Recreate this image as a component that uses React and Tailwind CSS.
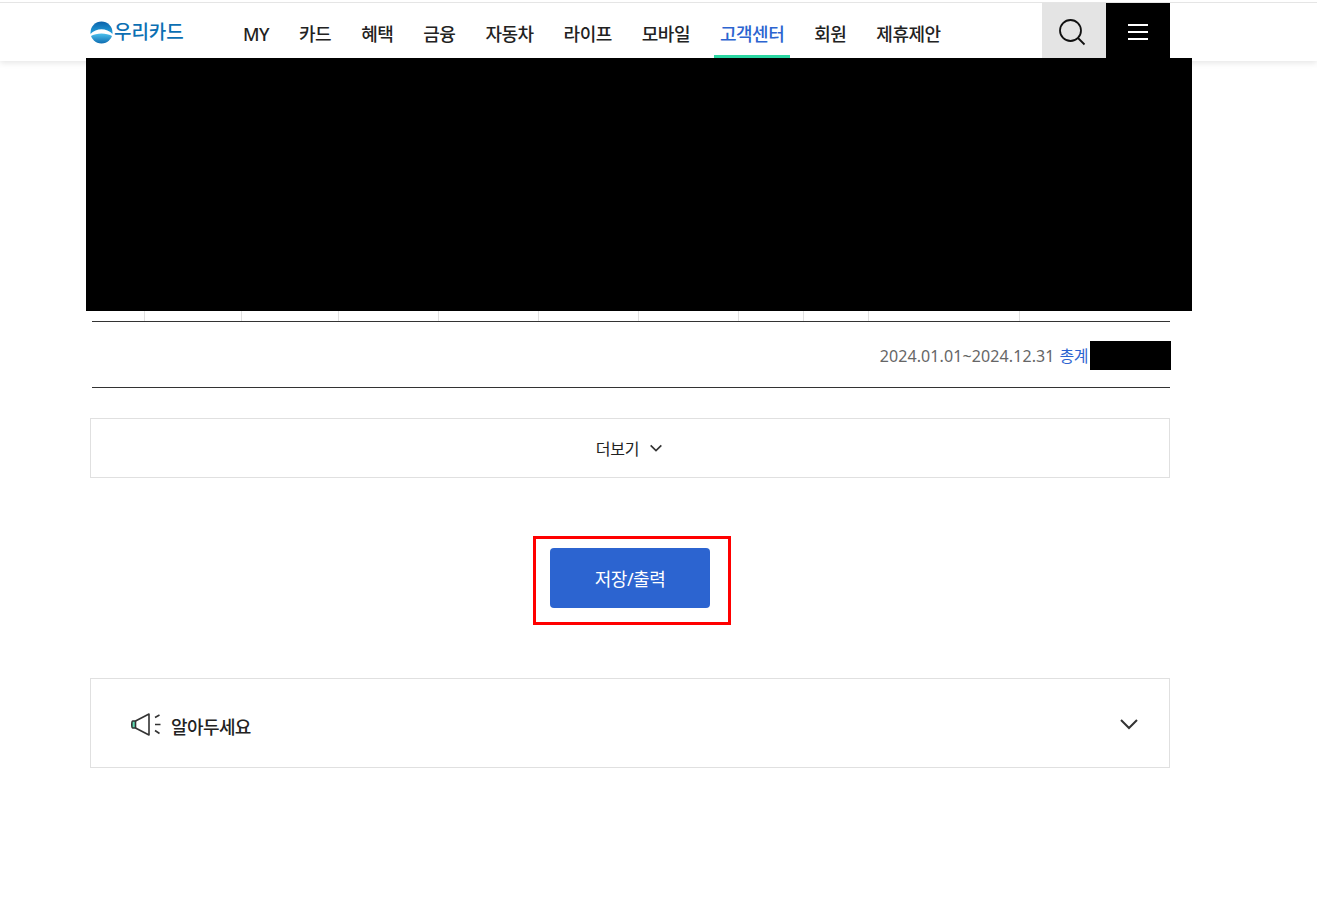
const font = { fontFamily: '"Noto Sans", "Noto Sans CJK KR", sans-serif' };

const navItems = ["MY", "카드", "혜택", "금융", "자동차", "라이프", "모바일", "고객센터", "회원", "제휴제안"];
const columns = ["w-[53px]", "w-[97px]", "w-[97px]", "w-[100px]", "w-[100px]", "w-[100px]", "w-[100px]", "w-[65px]", "w-[65px]", "w-[151px]", "flex-1"];

function Logo() {
  return (
    <a className="flex h-[24px] w-[95px] items-center text-[#0b6fb3]">
      <svg width="23" height="23" viewBox="0 0 23 23" className="shrink-0">
        <defs>
          <linearGradient id="logoTop" x1="0" y1="0" x2="0" y2="1">
            <stop offset="0" stopColor="#0a5fa8" />
            <stop offset="1" stopColor="#25a6e0" />
          </linearGradient>
          <linearGradient id="logoBottom" x1="0" y1="0" x2="0" y2="1">
            <stop offset="0" stopColor="#4cc0ec" />
            <stop offset="1" stopColor="#0a68ae" />
          </linearGradient>
          <clipPath id="logoClip">
            <circle cx="11.5" cy="11.5" r="11" />
          </clipPath>
        </defs>
        <g clipPath="url(#logoClip)">
          <rect width="23" height="23" fill="#fff" />
          <path d="M0 13.500C3.500 9.600 7.500 8.200 11.500 8.200S19.500 9.600 23 13.500V0H0Z" fill="url(#logoTop)" />
          <path d="M0 15.500C4 13.400 7.500 12.600 11.500 12.600S19 13.400 23 15.500V23H0Z" fill="url(#logoBottom)" />
        </g>
      </svg>
      <span className="ml-[1px] whitespace-nowrap text-[19px] leading-none font-medium tracking-[-0.1px]">우리카드</span>
    </a>
  );
}

function Header() {
  return (
    <header className="h-[61px] bg-white pt-[2px] shadow-[0_2px_6px_rgba(0,0,0,0.1)]">
      <div className="h-full border-t border-[#e5e5e5]">
        <div className="ml-[90px] flex h-[55px] w-[1080px] items-stretch">
          <div className="flex items-center pt-[4px]">
            <Logo />
          </div>
          <nav className="ml-[52px] flex gap-[18px]">
            {navItems.map((item) => {
              const active = item === "고객센터";
              return (
                <a
                  key={item}
                  className={
                    "flex h-full items-center border-b-[3px] px-[6px] pt-[10px] text-[18px] font-medium tracking-[-0.5px] whitespace-nowrap " +
                    (active ? "border-[#2bd6a2] text-[#2c64d0]" : "border-transparent text-[#222]")
                  }
                >
                  {item}
                </a>
              );
            })}
          </nav>
          <div className="ml-auto flex">
            <button className="flex w-[64px] items-center justify-center bg-[#e4e4e4] pr-[4px] pt-[2px]">
              <svg width="28" height="28" viewBox="0 0 28 28" fill="none" stroke="#111" strokeWidth="1.8">
                <circle cx="12.500" cy="12.500" r="10.500" />
                <path d="M20 20L26.500 26.500" />
              </svg>
            </button>
            <button className="flex w-[64px] flex-col items-center gap-[5px] bg-black pt-[21px]">
              <span className="h-[2px] w-[20px] bg-white" />
              <span className="h-[2px] w-[20px] bg-white" />
              <span className="h-[2px] w-[20px] bg-white" />
            </button>
          </div>
        </div>
      </div>
    </header>
  );
}

function Chevron({ size, width }) {
  return (
    <svg width={size} height={size} viewBox="0 0 18 18" fill="none" stroke="#333" strokeWidth={width}>
      <path d="M1 5L9 13L17 5" />
    </svg>
  );
}

function Megaphone() {
  return (
    <svg width="30" height="23" viewBox="0 0 30 23" fill="none" stroke="#333" strokeWidth="1.600" className="mt-[2px]">
      <path d="M4.500 8H1.800Q0.800 8 0.800 11.500T1.800 15H4.500Z" fill="#5fdcb4" />
      <path d="M4.500 8L18 1V22L4.500 15" strokeLinejoin="round" />
      <path d="M24 4.500L28.500 2M24 11.500H29.500M24 17.500L28.500 20.500" />
    </svg>
  );
}

export default function App() {
  return (
    <div className="min-h-[912px] bg-white text-[#222]" style={font}>
      <Header />
      <div className="relative z-10 -mt-[3px] ml-[86px] h-[253px] w-[1106px] bg-black" />

      <main className="ml-[90px] w-[1080px]">
        <div className="ml-[2px] flex h-[10px] w-[1078px]">
          {columns.map((width, i) => (
            <div key={i} className={width + (i < columns.length - 1 ? " border-r border-[#e0e0e0]" : "")} />
          ))}
        </div>
        <div className="ml-[2px] flex h-[67px] w-[1078px] items-center justify-end border-t border-b border-t-[#333] border-b-[#333] pt-[2px]">
          <span className="text-[16px] tracking-[0.1px] text-[#666]">2024.01.01~2024.12.31</span>
          <span className="ml-[5px] text-[16px] tracking-[-0.5px] text-[#2c64d0]">총계</span>
          <span className="-mr-[1px] ml-[2px] h-[29px] w-[81px] bg-black" />
        </div>

        <button className="mt-[30px] flex h-[60px] w-full items-center justify-center border border-[#e0e0e0] bg-white pt-[2px] pr-[2px] text-[16px] tracking-[-0.3px] text-[#222]">
          <span>더보기</span>
          <span className="ml-[11px] -mt-[2px]">
            <Chevron size={12} width={2.4} />
          </span>
        </button>

        <div className="mt-[58px] flex justify-center">
          <div className="ml-[4px] border-[3px] border-[#ff0000] pt-[9px] pr-[18px] pb-[14px] pl-[14px]">
            <button className="flex h-[60px] w-[160px] items-center justify-center rounded-[4px] bg-[#2c64d0] pt-[2px] text-[18px] tracking-[-0.45px] text-white">
              저장/출력
            </button>
          </div>
        </div>

        <section className="mt-[53px] flex h-[90px] items-center border border-[#e0e0e0] pr-[31px] pl-[40px]">
          <Megaphone />
          <h2 className="mt-[9px] ml-[10px] text-[18px] font-medium tracking-[-0.6px] text-[#222]">알아두세요</h2>
          <span className="mt-[2px] ml-auto">
            <Chevron size={18} width={2} />
          </span>
        </section>
      </main>
    </div>
  );
}
